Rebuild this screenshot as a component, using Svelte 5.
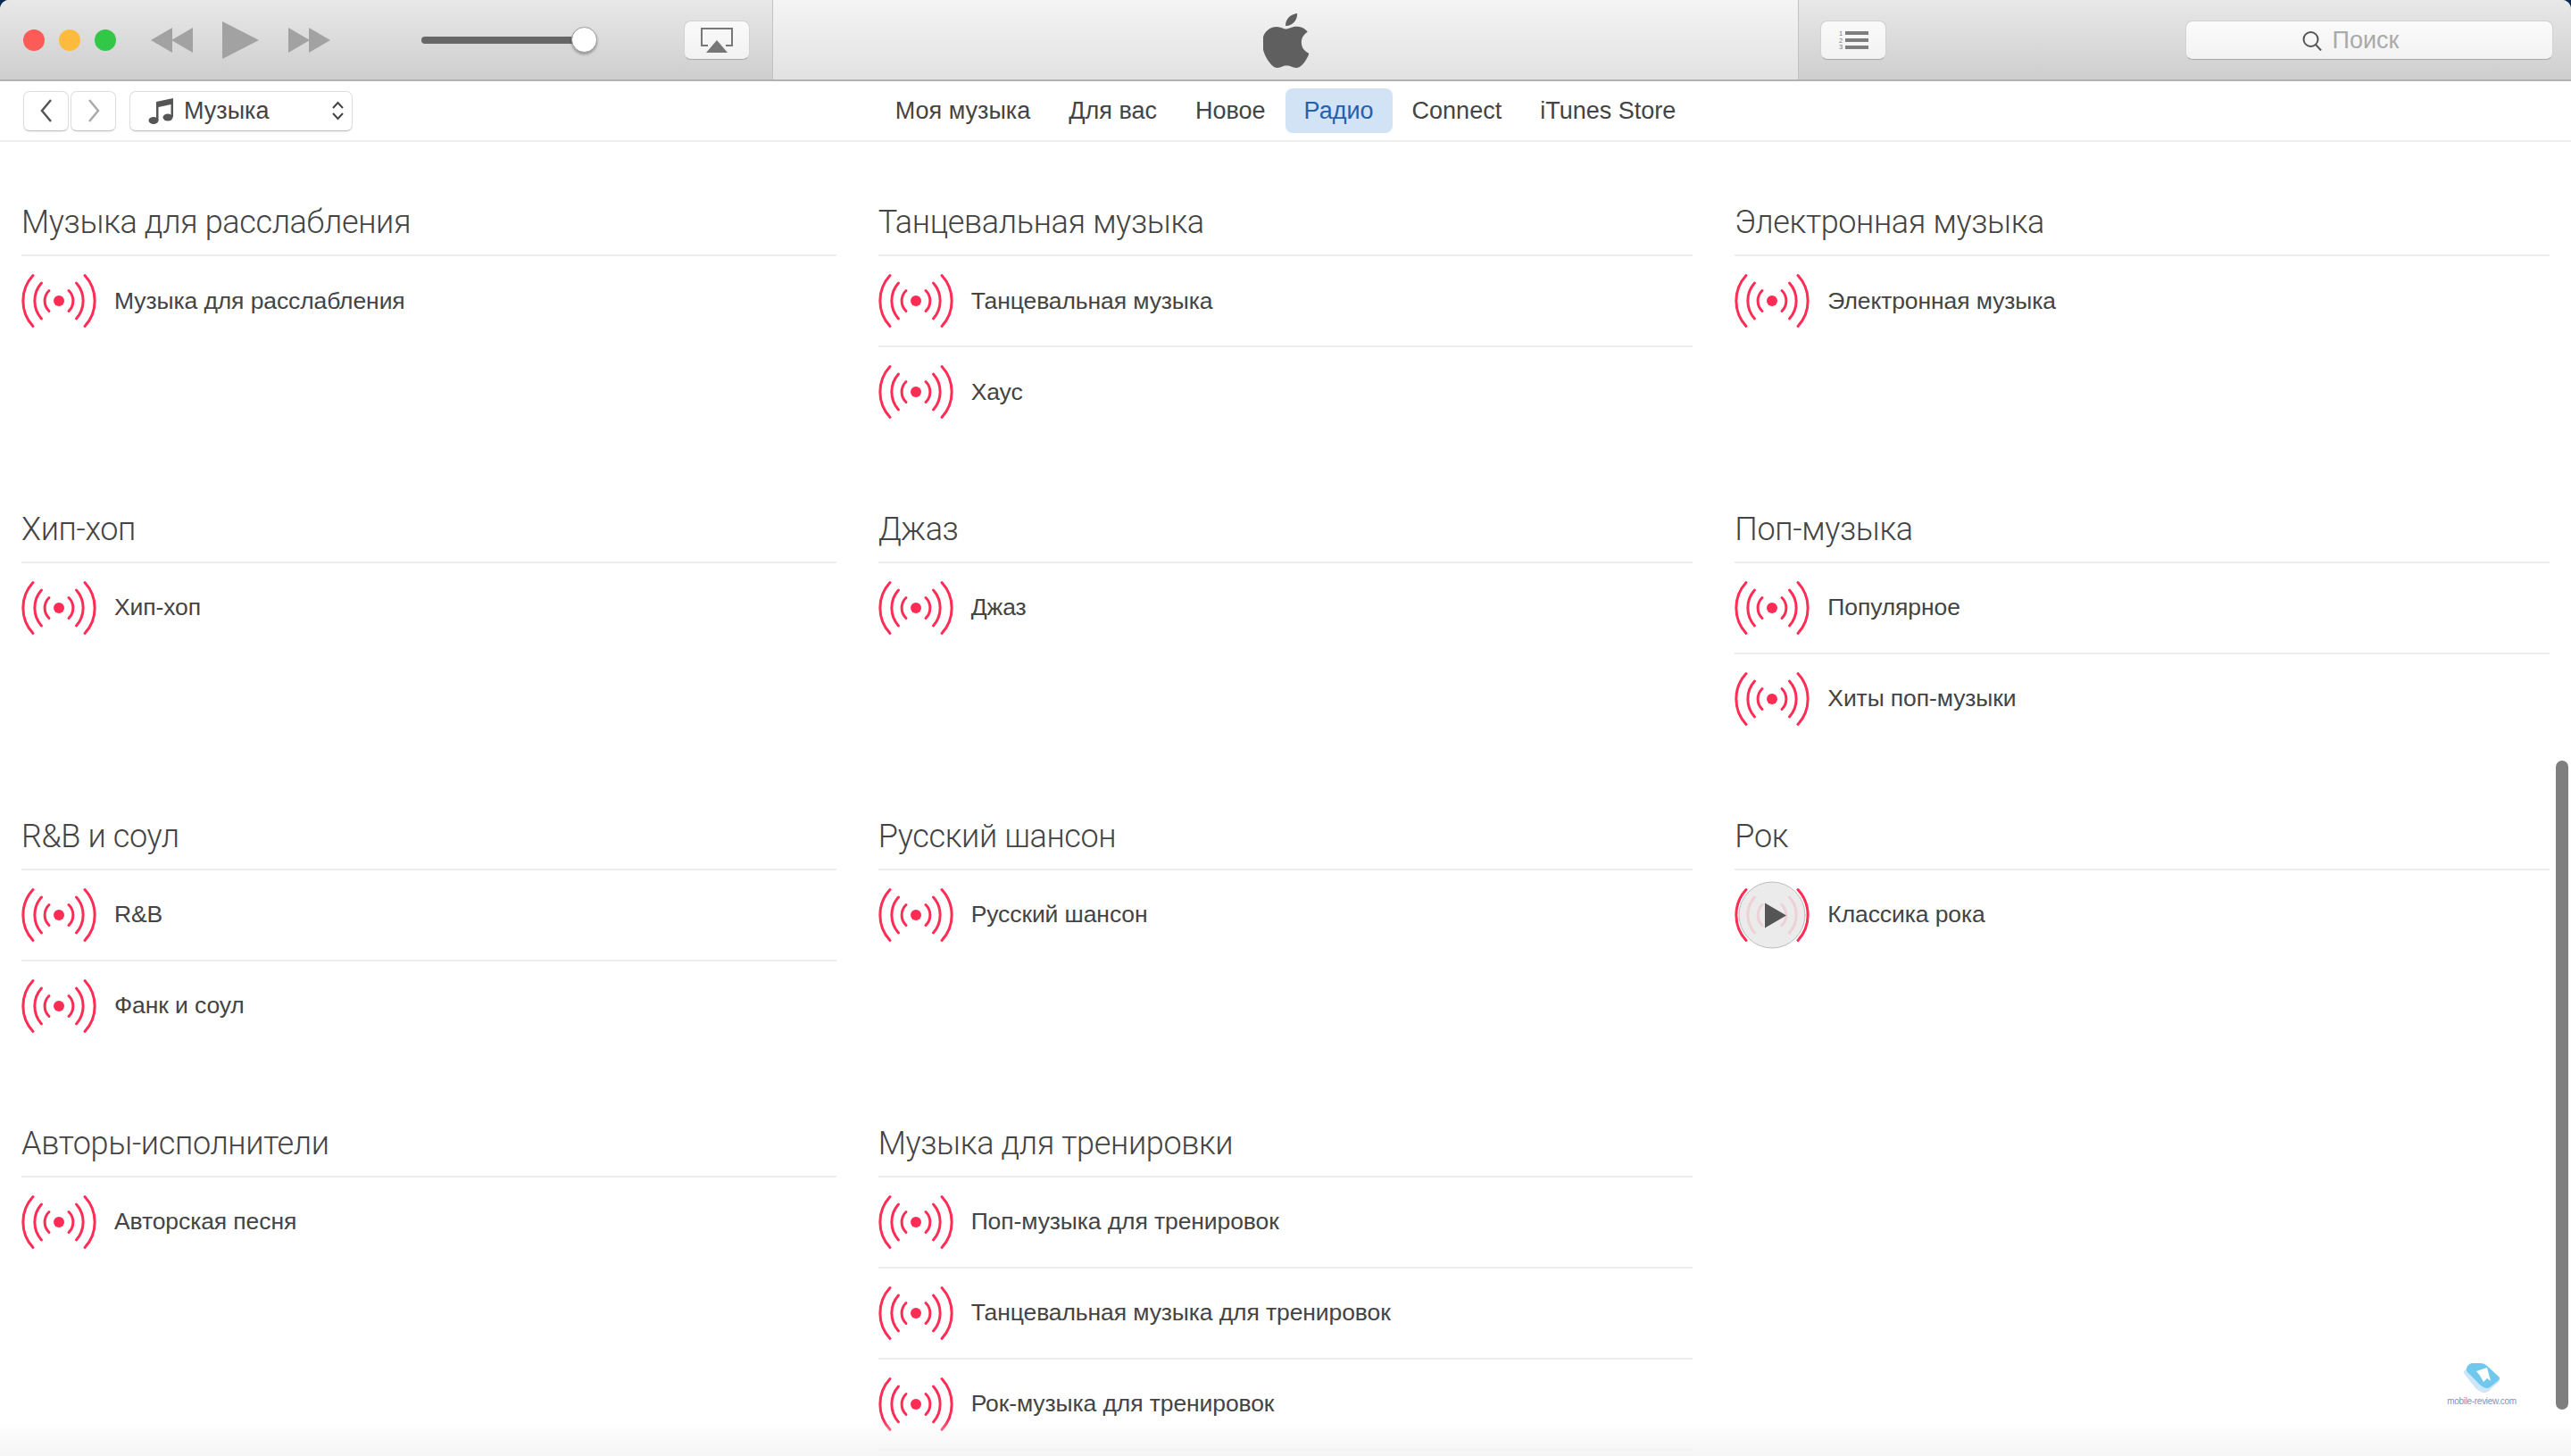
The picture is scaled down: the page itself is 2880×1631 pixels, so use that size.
<script>
	const sections = [
		{ title: 'Музыка для расслабления', rows: ['Музыка для расслабления'] },
		{ title: 'Танцевальная музыка', rows: ['Танцевальная музыка', 'Хаус'] },
		{ title: 'Электронная музыка', rows: ['Электронная музыка'] },
		{ title: 'Хип-хоп', rows: ['Хип-хоп'] },
		{ title: 'Джаз', rows: ['Джаз'] },
		{ title: 'Поп-музыка', rows: ['Популярное', 'Хиты поп-музыки'] },
		{ title: 'R&B и соул', rows: ['R&B', 'Фанк и соул'] },
		{ title: 'Русский шансон', rows: ['Русский шансон'] },
		{ title: 'Рок', rows: ['Классика рока'] },
		{ title: 'Авторы-исполнители', rows: ['Авторская песня'] },
		{
			title: 'Музыка для тренировки',
			rows: ['Поп-музыка для тренировок', 'Танцевальная музыка для тренировок', 'Рок-музыка для тренировок'],
			more: true
		}
	];
	const tabs = ['Моя музыка', 'Для вас', 'Новое', 'Радио', 'Connect', 'iTunes Store'];
	const HOVERED = 'Классика рока';
</script>

{#snippet radio(hovered)}
	<svg class="radio" viewBox="0 0 84 60" width="84" height="60">
		<g fill="none" stroke="#ff2d55" stroke-width="3" stroke-linecap="round">
			<path d="M13 1.5A42 42 0 0 0 13 58.5" />
			<path d="M71 1.5A42 42 0 0 1 71 58.5" />
			{#if hovered}
				<circle class="disc" cx="42" cy="30" r="37" />
			{/if}
			<g opacity={hovered ? 0.13 : 1}>
				<path d="M22.5 10A30 30 0 0 0 22.5 50" />
				<path d="M61.5 10A30 30 0 0 1 61.5 50" />
				<path d="M31 18.5A16 16 0 0 0 31 41.5" />
				<path d="M53 18.5A16 16 0 0 1 53 41.5" />
			</g>
		</g>
		{#if hovered}
			<path d="M34 16.5L58 30.5L34 44.5Z" fill="#555" />
		{:else}
			<circle cx="42" cy="30" r="6" fill="#ff2d55" />
		{/if}
	</svg>
{/snippet}

<div class="window">
	<header class="toolbar">
		<div class="zone left">
			<div class="lights">
				<span class="light red"></span>
				<span class="light yellow"></span>
				<span class="light green"></span>
			</div>
			<div class="transport">
				<svg width="47" height="28" viewBox="0 0 47 28"><path d="M24 0V28L0 14ZM47 0V28L23 14Z" fill="#a2a2a2" /></svg>
				<svg width="41" height="42" viewBox="0 0 41 42"><path d="M0 0L41 21L0 42Z" fill="#a2a2a2" /></svg>
				<svg width="47" height="28" viewBox="0 0 47 28"><path d="M0 0V28L24 14ZM23 0V28L47 14Z" fill="#a2a2a2" /></svg>
			</div>
			<div class="volume">
				<div class="track"></div>
				<div class="knob"></div>
			</div>
			<button class="tool airplay" aria-label="AirPlay">
				<svg width="36" height="28" viewBox="0 0 36 28">
					<path d="M8 20H1V1H35V20H28" fill="none" stroke="#777" stroke-width="2" />
					<path d="M18 14L30 28H6Z" fill="#777" />
				</svg>
			</button>
		</div>
		<div class="zone lcd">
			<svg width="51" height="61" viewBox="2.6 0 19 24" preserveAspectRatio="none">
				<path
					fill="#5f5f5f"
					d="M12.152 6.896c-.948 0-2.415-1.078-3.96-1.04-2.04.027-3.91 1.183-4.961 3.014-2.117 3.675-.546 9.103 1.519 12.09 1.013 1.454 2.208 3.09 3.792 3.039 1.52-.065 2.09-.987 3.935-.987 1.831 0 2.35.987 3.96.948 1.637-.026 2.676-1.48 3.676-2.948 1.156-1.688 1.636-3.325 1.662-3.415-.039-.013-3.182-1.221-3.22-4.857-.026-3.04 2.48-4.494 2.597-4.559-1.429-2.09-3.623-2.324-4.39-2.376-2-.156-3.675 1.09-4.61 1.09zM15.53 3.83c.843-1.012 1.4-2.427 1.245-3.83-1.207.052-2.662.805-3.532 1.818-.78.896-1.454 2.338-1.273 3.714 1.338.104 2.715-.688 3.559-1.701"
				/>
			</svg>
		</div>
		<div class="zone right">
			<button class="tool" aria-label="Следующие">
				<svg width="34" height="22" viewBox="0 0 34 22">
					<g fill="#7d7d7d">
						<rect x="8" y="1" width="26" height="4" />
						<rect x="8" y="9" width="26" height="4" />
						<rect x="8" y="17" width="26" height="4" />
					</g>
					<g class="nums" fill="#777">
						<text x="1" y="6">1</text>
						<text x="1" y="13.5">2</text>
						<text x="1" y="21">3</text>
					</g>
				</svg>
			</button>
			<div class="search">
				<svg width="23" height="22" viewBox="0 0 23 22">
					<circle cx="9.5" cy="9" r="8" fill="none" stroke="#555" stroke-width="2" />
					<path d="M15 15L21 21.5" stroke="#555" stroke-width="2" />
				</svg>
				<span>Поиск</span>
			</div>
		</div>
	</header>

	<nav class="navbar">
		<div class="nav-left">
			<div class="arrows">
				<button class="nav-btn" aria-label="Назад">
					<svg width="14" height="28" viewBox="0 0 14 28"><path d="M12 2L2 14L12 26" fill="none" stroke="#555" stroke-width="2.5" /></svg>
				</button>
				<button class="nav-btn" aria-label="Вперёд">
					<svg width="14" height="28" viewBox="0 0 14 28"><path d="M2 2L12 14L2 26" fill="none" stroke="#aaa" stroke-width="2.5" /></svg>
				</button>
			</div>
			<div class="media">
				<svg width="28" height="29" viewBox="0 0 28 29">
					<path fill="#555" d="M9 4L28 0V21H25.5V7L11.5 10V25H9Z" />
					<ellipse cx="6" cy="25" rx="5.5" ry="4" fill="#555" />
					<ellipse cx="22" cy="21.5" rx="5.5" ry="4" fill="#555" />
				</svg>
				<span class="media-label">Музыка</span>
				<svg class="stepper" width="15" height="22" viewBox="0 0 15 22">
					<path d="M2 8L7.5 2L13 8M2 14L7.5 20L13 14" fill="none" stroke="#444" stroke-width="2" />
				</svg>
			</div>
		</div>
		<div class="tabs">
			{#each tabs as tab}
				<span class="tab" class:active={tab === 'Радио'}>{tab}</span>
			{/each}
		</div>
	</nav>

	<main class="stations">
		{#each sections as section}
			<section class="genre">
				<h2>{section.title}</h2>
				{#each section.rows as row, i}
					<div class="row" class:ruled={section.more || i < section.rows.length - 1}>
						{@render radio(row === HOVERED)}
						<span>{row}</span>
					</div>
				{/each}
			</section>
		{/each}
	</main>

	<div class="fade"></div>
	<div class="scrollbar"></div>
	<div class="watermark">
		<svg width="42" height="35" viewBox="0 0 42 35">
			<path d="M1 9L8 3Q10 1 14 1L24 3Q27 4 29 6L40 17Q42 19 40 21L32 28Q28 34 22 33Q18 32 14 28L3 14Q0 11 1 9Z" fill="#cfe6f8" />
			<path d="M4 6Q5 1 10 0H20Q24 0 27 3L40 15Q42 17 40 19L30 27Q27 29 23 27Q18 24 14 19L5 10Q3 8 4 6Z" fill="#71c8ee" />
			<path d="M15 9L27 5L31 20L27 17L23 21L19 14Z" fill="#fff" />
		</svg>
		<span>mobile-review.com</span>
	</div>
</div>

<style>
	:global(body) {
		background: #0c2a4d;
	}

	.window {
		position: relative;
		width: 2880px;
		height: 1631px;
		overflow: hidden;
		background: #fff;
		border-radius: 10px 10px 0 0;
		font-family: 'Liberation Sans', Arial, sans-serif;
		color: #444;
	}

	.toolbar {
		display: flex;
		height: 91px;
		box-sizing: border-box;
		border-bottom: 2px solid #b1b1b1;
		background: linear-gradient(#e8e8e8, #cecece);
	}

	.zone {
		display: flex;
		align-items: center;
	}

	.left {
		width: 866px;
		box-sizing: border-box;
		padding-left: 26px;
		border-right: 1px solid #c2c2c2;
	}

	.lcd {
		width: 1148px;
		justify-content: center;
		background: linear-gradient(#f4f4f4, #e2e2e2);
		padding-top: 1px;
	}

	.right {
		flex: 1;
		padding: 0 20px 0 24px;
		border-left: 1px solid #c2c2c2;
		justify-content: space-between;
	}

	.lights {
		display: flex;
		gap: 16px;
	}

	.light {
		width: 24px;
		height: 24px;
		border-radius: 50%;
	}

	.red { background: #fc5b57; }
	.yellow { background: #fdbb3d; }
	.green { background: #33c748; }

	.transport {
		display: flex;
		align-items: center;
		gap: 33px;
		margin-left: 39px;
	}

	.volume {
		position: relative;
		display: flex;
		align-items: center;
		width: 197px;
		height: 30px;
		margin-left: 102px;
	}

	.track {
		width: 175px;
		height: 8px;
		border-radius: 4px;
		background: #676767;
	}

	.knob {
		position: absolute;
		right: 0;
		top: 0;
		width: 29px;
		height: 29px;
		box-sizing: border-box;
		border-radius: 50%;
		background: #fff;
		border: 1px solid #999;
		box-shadow: 0 2px 3px rgba(0, 0, 0, 0.3);
	}

	.tool {
		display: flex;
		align-items: center;
		justify-content: center;
		width: 74px;
		height: 44px;
		padding: 0;
		box-sizing: border-box;
		border: 1px solid #d2d2d2;
		border-bottom-color: #a9a9a9;
		border-radius: 8px;
		background: linear-gradient(#fafafa, #f2f2f2);
	}

	.airplay {
		margin-left: 97px;
	}

	.search {
		display: flex;
		align-items: center;
		justify-content: center;
		gap: 11px;
		width: 412px;
		height: 44px;
		box-sizing: border-box;
		padding: 2px 42px 0 0;
		border: 1px solid #d2d2d2;
		border-bottom-color: #a9a9a9;
		border-radius: 8px;
		background: linear-gradient(#fbfbfb, #f2f2f2);
		font-size: 27px;
		color: #aaa;
	}

	.nums {
		font-size: 7.5px;
	}

	.navbar {
		display: grid;
		grid-template-columns: 1fr auto 1fr;
		align-items: center;
		height: 68px;
		box-sizing: border-box;
		border-bottom: 2px solid #eeeeee;
	}

	.nav-left {
		display: flex;
		align-items: center;
		gap: 16px;
		padding-left: 26px;
	}

	.arrows {
		display: flex;
		gap: 2px;
	}

	.nav-btn,
	.media {
		height: 45px;
		box-sizing: border-box;
		border: 1px solid #dedede;
		border-bottom-color: #c4c4c4;
		border-radius: 7px;
		background: #fff;
		box-shadow: 0 1px 1px rgba(0, 0, 0, 0.08);
	}

	.nav-btn {
		display: flex;
		align-items: center;
		justify-content: center;
		width: 51px;
		padding: 0;
	}

	.media {
		display: flex;
		align-items: center;
		width: 250px;
		margin-left: -1px;
		padding: 0 8px 0 20px;
	}

	.media-label {
		margin-left: 12px;
		font-size: 27px;
	}

	.stepper {
		margin-left: auto;
	}

	.tabs {
		display: flex;
		align-items: center;
		gap: 1px;
	}

	.tab {
		height: 50px;
		padding: 0 21px;
		border-radius: 8px;
		font-size: 27px;
		line-height: 50px;
	}

	.tab.active {
		background: #d3e3f6;
		color: #2560ad;
	}

	.stations {
		display: grid;
		grid-template-columns: repeat(3, 1fr);
		grid-auto-rows: 343.9px;
		column-gap: 47px;
		padding: 51px 24px 0;
	}

	.genre h2 {
		height: 77px;
		margin: 0;
		box-sizing: border-box;
		border-bottom: 2px solid #ededed;
		font-family: Roboto, 'Liberation Sans', sans-serif;
		font-size: 36px;
		font-weight: 300;
		letter-spacing: -0.35px;
		line-height: 79px;
	}

	.row {
		display: flex;
		align-items: center;
		gap: 20px;
		height: 102px;
		box-sizing: border-box;
		border-bottom: 2px solid transparent;
		font-size: 26.5px;
		letter-spacing: -0.1px;
	}

	.row.ruled {
		border-bottom-color: #ededed;
	}

	.radio {
		overflow: visible;
		flex: none;
	}

	.disc {
		fill: #ebebeb;
		stroke: #bdbdbd;
		stroke-width: 1;
	}

	.fade {
		position: absolute;
		left: 0;
		right: 0;
		bottom: 0;
		height: 40px;
		background: linear-gradient(rgba(245, 245, 245, 0), #f5f5f5);
		pointer-events: none;
	}

	.scrollbar {
		position: absolute;
		right: 3px;
		top: 852px;
		width: 14px;
		height: 727px;
		border-radius: 7px;
		background: #7f7f7f;
	}

	.watermark {
		position: absolute;
		left: 2743px;
		top: 1527px;
		width: 74px;
		display: flex;
		flex-direction: column;
		align-items: center;
		color: #8b90b6;
		font-size: 10px;
		line-height: 12px;
		white-space: nowrap;
	}

	.watermark span {
		letter-spacing: -0.3px;
		margin-top: 2px;
	}
</style>
